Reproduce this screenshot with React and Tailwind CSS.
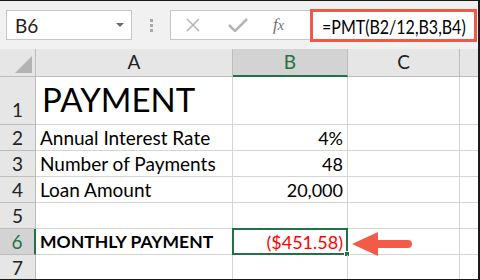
import { Fragment } from 'react';

const font = { fontFamily: 'Lato, "Open Sans", sans-serif' };

const rows = [
    { n: 1, h: 'h-12', a: 'PAYMENT', b: '', big: true },
    { n: 2, h: 'h-[26px]', a: 'Annual Interest Rate', b: '4%' },
    { n: 3, h: 'h-[26px]', a: 'Number of Payments', b: '48' },
    { n: 4, h: 'h-[26px]', a: 'Loan Amount', b: '20,000' },
    { n: 5, h: 'h-[26px]', a: '', b: '' },
    { n: 6, h: 'h-[26px]', a: 'MONTHLY PAYMENT', b: '($451.58)', sel: true },
    { n: 7, h: 'h-[26px]', a: '', b: '' },
];

function Toolbar() {
    return (
        <div className="h-12 bg-[#f1f1f1] flex items-start pt-[9px] pl-[6px]">
            <div className="shrink-0 w-[126px] h-[30px] bg-white border border-[#c6c6c6] flex items-center justify-between pl-[8px] pr-[6px]">
                <span className="text-[19px] text-[#222] leading-none">B6</span>
                <svg width="10" height="6" viewBox="0 0 10 6"><path d="M1 1h8L5 5z" fill="#6b6b6b" /></svg>
            </div>
            <div className="shrink-0 w-[38px] h-[30px] flex flex-col items-center justify-center gap-[2px]">
                <span className="w-[3px] h-[3px] bg-[#a8a8a8]" />
                <span className="w-[3px] h-[3px] bg-[#a8a8a8]" />
                <span className="w-[3px] h-[3px] bg-[#a8a8a8]" />
            </div>
            <div className="shrink-0 w-[140px] h-[30px] bg-white border border-[#c6c6c6] border-r-0 flex items-center">
                <svg className="ml-[15px]" width="14" height="14" viewBox="0 0 14 14"><path d="M1 1l12 12M13 1L1 13" stroke="#b5b5b5" strokeWidth="1.6" /></svg>
                <svg className="ml-[28px]" width="20" height="14" viewBox="0 0 20 14"><path d="M1 7l6 6L19 1" stroke="#b5b5b5" strokeWidth="2.6" fill="none" /></svg>
                <span className="ml-[25px] text-[17px] italic text-[#6f6f6f]" style={{ fontFamily: '"Liberation Serif", serif' }}>f<span className="text-[14px]">x</span></span>
            </div>
            <div className="flex-1 min-w-0 h-[33px] -mt-[1px] mr-[1px] bg-white border-[3px] border-[#f0584a] flex items-center pl-[9px] overflow-hidden">
                <span className="inline-block origin-left scale-x-[0.8] text-[20px] text-black leading-none whitespace-nowrap">=PMT(B2/12,B3,B4)</span>
            </div>
        </div>
    );
}

function HeaderRow() {
    return (
        <>
            <div className="h-7 bg-[#e6e6e6] border-r border-b border-[#bdbdbd] flex items-end justify-end p-[3px]">
                <svg width="17" height="17" viewBox="0 0 17 17"><path d="M17 0v17H0z" fill="#b3b3b3" /></svg>
            </div>
            <div className="h-7 bg-[#e6e6e6] border-r border-b border-[#bdbdbd] flex items-center justify-center text-[19px] text-[#222]">A</div>
            <div className="h-7 bg-[#d3d3d3] border-r border-[#bdbdbd] border-b-2 border-b-[#217346] flex items-center justify-center text-[19px] text-[#217346]">B</div>
            <div className="h-7 bg-[#e6e6e6] border-r border-b border-[#bdbdbd] flex items-center justify-center text-[19px] text-[#222]">C</div>
            <div className="h-7 bg-[#e6e6e6] border-b border-[#bdbdbd]" />
        </>
    );
}

export default function App() {
    return (
        <div className="w-[480px] h-[280px] overflow-hidden bg-white border-t border-b border-r-2 border-[#1a1a1a] relative" style={font}>
            <Toolbar />
            <div className="grid grid-cols-[36px_197px_115px_112px_1fr]">
                <HeaderRow />
                {rows.map(r => (
                    <Fragment key={r.n}>
                        <div className={`${r.h} ${r.sel ? 'bg-[#d3d3d3] text-[#217346] border-r-2 border-r-[#217346]' : 'bg-[#e6e6e6] text-[#222] border-r border-r-[#bdbdbd]'} border-b border-b-[#bdbdbd] flex items-end justify-center pb-[1px] text-[19px] leading-none`}>
                            <span className={r.big ? 'mb-[4px]' : 'mb-[2px]'}>{r.n}</span>
                        </div>
                        <div className={`${r.h} border-r border-b border-[#d4d4d4] flex items-end whitespace-nowrap ${r.big ? 'text-[33px] pl-[6px] pb-[8px]' : r.sel ? 'text-[17.5px] font-bold pl-[4px] pb-[4px]' : 'text-[19px] pl-[4px] pb-[3px]'} leading-none text-black`}>
                            {r.a}
                        </div>
                        <div className={`${r.h} border-r border-b border-[#d4d4d4] flex items-end justify-end pr-[4px] pb-[3px] text-[18px] leading-none relative ${r.sel ? 'text-[#ff0000]' : 'text-black'}`}>
                            {r.b}
                            {r.sel && (
                                <>
                                    <div className="absolute -left-[1px] -top-[1px] -right-[1px] -bottom-[1px] border-2 border-[#217346]" />
                                    <div className="absolute -right-[3px] -bottom-[3px] w-[6px] h-[6px] bg-[#217346] border border-white" />
                                </>
                            )}
                        </div>
                        <div className={`${r.h} border-r border-b border-[#d4d4d4]`} />
                        <div className={`${r.h} border-b border-[#d4d4d4]`} />
                    </Fragment>
                ))}
            </div>
            <svg className="absolute left-[350px] top-[229px]" width="64" height="28" viewBox="0 0 64 28">
                <path d="M2 14L28 2v8h30a4 4 0 0 1 0 8H28v8z" fill="#f35a48" />
            </svg>
        </div>
    );
}
